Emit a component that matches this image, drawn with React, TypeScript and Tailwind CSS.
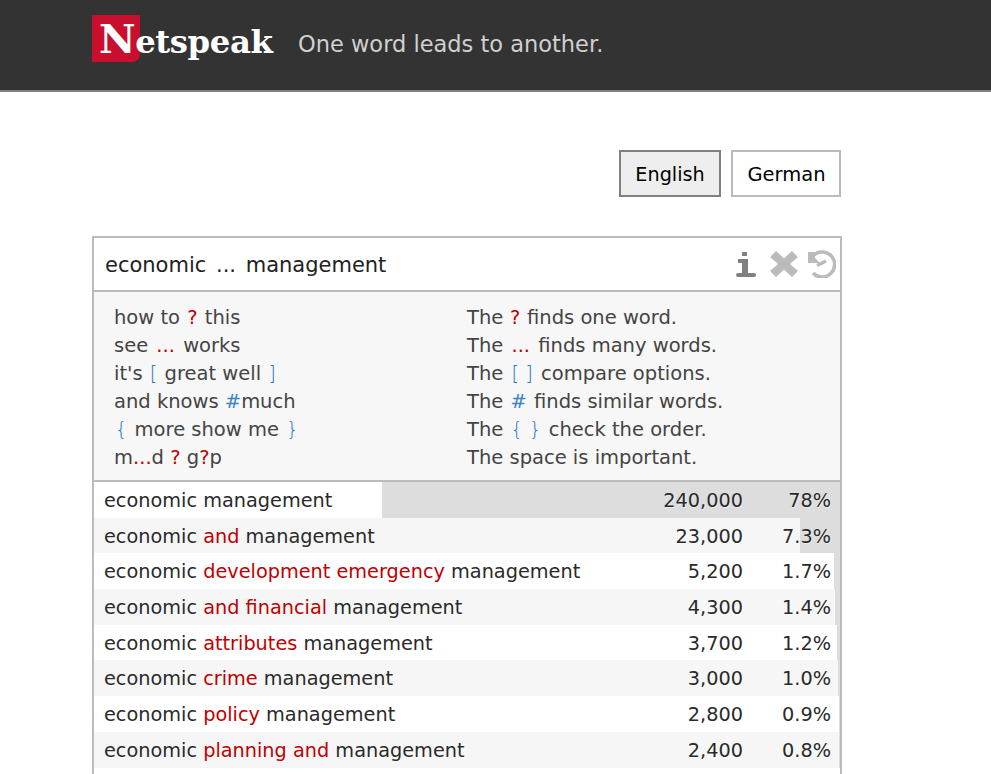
import React from "react";

const R = ({ c }: { c: string }) => <span className="text-[#c00000] px-[1px]">{c}</span>;
const Q = ({ c }: { c: string }) => <span className="text-[#c00000]">{c}</span>;
const E = () => <span className="text-[#c00000] px-[2px]">...</span>;
const B = ({ c }: { c: string }) => <span className="text-[#2a78bd] font-extralight px-[1px]">{c}</span>;
const H = () => <span className="text-[#3f85c0]">#</span>;

const rows: { p: [string, boolean][]; n: string; f: string; w: string }[] = [
  { p: [["economic management", false]], n: "240,000", f: "78%", w: "w-[288px]" },
  { p: [["economic ", false], ["and", true], [" management", false]], n: "23,000", f: "7.3%", w: "w-[706px]" },
  { p: [["economic ", false], ["development emergency", true], [" management", false]], n: "5,200", f: "1.7%", w: "w-[740px]" },
  { p: [["economic ", false], ["and financial", true], [" management", false]], n: "4,300", f: "1.4%", w: "w-[741px]" },
  { p: [["economic ", false], ["attributes", true], [" management", false]], n: "3,700", f: "1.2%", w: "w-[743px]" },
  { p: [["economic ", false], ["crime", true], [" management", false]], n: "3,000", f: "1.0%", w: "w-[744px]" },
  { p: [["economic ", false], ["policy", true], [" management", false]], n: "2,800", f: "0.9%", w: "w-[745px]" },
  { p: [["economic ", false], ["planning and", true], [" management", false]], n: "2,400", f: "0.8%", w: "w-[745px]" },
];

const hints: [React.ReactNode, React.ReactNode][] = [
  [<>how to <R c="?" /> this</>, <>The <span className="px-[0.5px]"><Q c="?" /></span> finds one word.</>],
  [<>see <E /> works</>, <>The <E /> finds many words.</>],
  [<>it's <B c="[" /> great well <B c="]" /></>, <>The <span className="px-[1px]"><B c="[ ]" /></span> compare options.</>],
  [<>and knows <H />much</>, <>The <span className="px-[1px]"><H /></span> finds similar words.</>],
  [<><B c="{" /> more show me <B c="}" /></>, <>The <B c="{ }" /> check the order.</>],
  [<>m<Q c="..." />d <Q c="?" /> g<Q c="?" />p</>, <>The space is important.</>],
];

export default function App() {
  return (
    <div className="h-screen overflow-hidden bg-white font-['DejaVu_Sans',sans-serif]">
      <header className="h-[92px] bg-[#333333] border-b-2 border-[#808080] pl-[92px] flex items-start">
        <div className="relative mt-[15px] w-[186px] h-[47px]">
          <div className="absolute left-0 top-0 w-[48px] h-[47px] bg-[#c8102e] rounded-br-[8px]" />
          <div className="absolute left-[7px] top-[1px] font-['DejaVu_Serif',serif] font-bold text-[32.3px] tracking-[-0.4px] leading-[46px] text-white whitespace-nowrap">
            <span className="text-[40px]">N</span>etspeak
          </div>
        </div>
        <div className="ml-[20px] mt-[28px] text-[22.5px] leading-[32px] text-[#d0d0d0] whitespace-nowrap">One word leads to another.</div>
      </header>

      <div className="w-[750px] ml-[92px]">
        <div className="flex justify-end gap-[10px] mt-[58px] pr-px">
          <button className="w-[102px] h-[47px] pt-[3px] border-2 border-[#808080] bg-[#eeeeee] text-[19.2px] text-black">English</button>
          <button className="w-[110px] h-[47px] pt-[3px] pl-[1px] border-2 border-[#bbbbbb] bg-white text-[19.5px] text-black">German</button>
        </div>

        <div className="mt-[39px] border-2 border-b-0 border-[#bbbbbb]">
          <div className="h-[54px] flex items-center pl-[11px] pr-[4px] border-b-2 border-[#bbbbbb]">
            <span className="flex-1 pt-[4px] text-[21px] [word-spacing:3px] text-[#222222]">economic ... management</span>
            <svg width="20" height="28" viewBox="0 0 20 28" className="mr-[14px]" fill="#808080">
              <rect x="6" y="2" width="5" height="4" />
              <path d="M2 9h10v14h6a2 2 0 0 1 0 4H2a2 2 0 0 1 0-4h4V13H2z" />
            </svg>
            <svg width="28" height="28" viewBox="0 0 28 28" className="mr-[10px]" fill="#bbbbbb">
              <path d="M6 1l8 7.500 8-7.500 6 6-8 7 8 7-6 6-8-7.500-8 7.500-6-6 8-7-8-7z" />
            </svg>
            <svg width="28" height="28" viewBox="0 0 28 28" fill="none" stroke="#bbbbbb">
              <path d="M6 5A12.500 12.500 0 1 1 5 23" strokeWidth="3.500" />
              <path d="M0 2h7v6l5 5H0z" fill="#bbbbbb" stroke="none" />
              <path d="M18 11l-9 4.500" strokeWidth="3.500" />
            </svg>
          </div>
          <div className="h-[190px] bg-[#f7f7f7] border-b-2 border-[#bbbbbb] pt-[12px] text-[19.5px] leading-[28px] text-[#444444] grid grid-cols-[353px_1fr] content-start pl-[20px]">
            {hints.map(([a, b], i) => (
              <React.Fragment key={i}>
                <div>{a}</div>
                <div>{b}</div>
              </React.Fragment>
            ))}
          </div>
          {rows.map((r, i) => (
            <div key={i} className="relative h-[35.7px] bg-[#dddddd]">
              <div className={`absolute left-0 top-0 bottom-0 ${r.w} ${i % 2 ? "bg-[#f6f6f6]" : "bg-white"}`} />
              <div className="relative h-full pt-[3px] flex items-center text-[19.3px] text-[#2a2a2a] [text-shadow:1px_1px_1px_#ffffff80]">
                <span className="flex-1 pl-[10px] whitespace-nowrap">
                  {r.p.map(([t, red], j) => (
                    <span key={j} className={red ? "text-[#c00000]" : ""}>{t}</span>
                  ))}
                </span>
                <span className="w-[120px] text-right">{r.n}</span>
                <span className="w-[97px] pr-[9px] text-right">{r.f}</span>
              </div>
            </div>
          ))}
          <div className="h-[40px] bg-white" />
        </div>
      </div>
    </div>
  );
}
